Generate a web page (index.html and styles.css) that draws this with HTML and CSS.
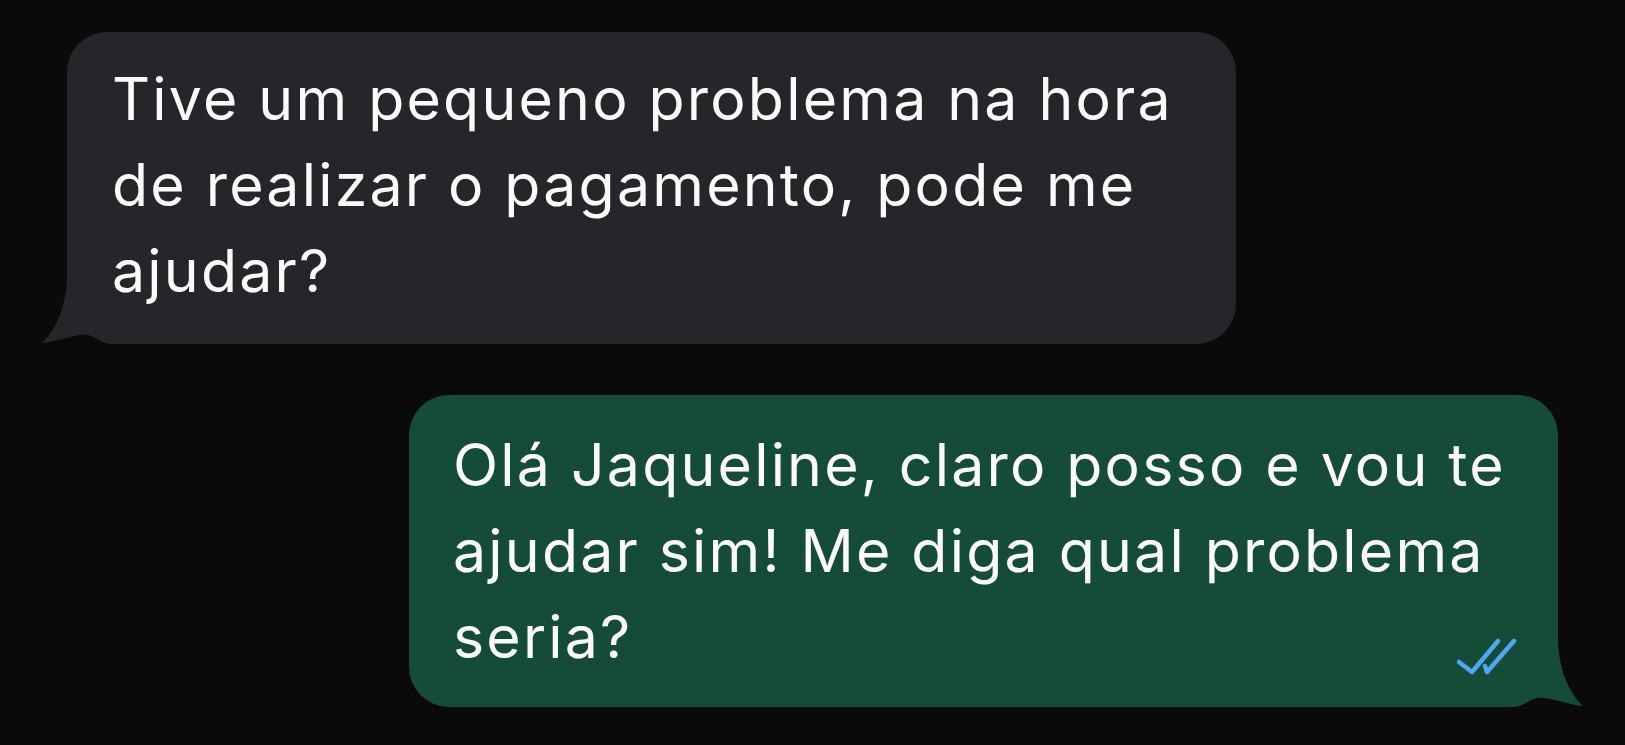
FILE: index.html
```html
<!DOCTYPE html>
<html lang="pt-BR">
<head>
    <meta charset="UTF-8">
    <meta name="viewport" content="width=device-width, initial-scale=1.0">
    <title>Conversa</title>
    <link rel="stylesheet" href="styles.css">
</head>
<body>
    <div class="chat">
        <div class="msg msg-in">
            <svg class="tail" viewBox="0 0 88 100" width="88" height="100">
                <path d="M25 0 L25 30 C25 60 15 85 0 99 C15 98 35 89 46 91 C55 93 60 100 70 100 L88 100 L88 0 Z"/>
            </svg>
            <p>Tive um pequeno problema na hora de realizar o pagamento, pode me ajudar?</p>
        </div>

        <div class="msg msg-out">
            <svg class="tail" viewBox="0 0 88 100" width="88" height="100">
                <path d="M25 0 L25 30 C25 60 15 85 0 99 C15 98 35 89 46 91 C55 93 60 100 70 100 L88 100 L88 0 Z"/>
            </svg>
            <p>Olá Jaqueline, claro posso e vou te ajudar sim! Me diga qual problema seria?</p>
            <svg class="ticks" viewBox="0 0 60 38" width="60" height="38">
                <path d="M2 25 L15 35 L41 4"/>
                <path d="M28 29 L30 35 L57 4"/>
            </svg>
        </div>
    </div>
</body>
</html>
```

FILE: styles.css
```css
body {
    margin: 0;
    background-color: #0a0a0a;
    font-family: Inter, "Noto Sans", sans-serif;
}
.chat {
    display: flex;
    flex-direction: column;
    gap: 51px;
    padding: 32px 67px;
}
.msg {
    position: relative;
    box-sizing: border-box;
    border-radius: 40px;
    color: #fafafa;
    font-size: 59px;
    line-height: 86px;
    letter-spacing: 2.2px;
}
.msg p {
    position: relative;
    margin: 0;
}
.msg-in {
    align-self: flex-start;
    width: 1169px;
    padding: 24px 30px 30px 45px;
    background-color: #252629;
    border-bottom-left-radius: 60px;
}
.msg-out {
    align-self: flex-end;
    width: 1149px;
    padding: 27px 30px 27px 44px;
    background-color: #154c37;
    border-bottom-right-radius: 60px;
}
.tail {
    position: absolute;
    bottom: 0;
    display: block;
}
.msg-in .tail {
    left: -25px;
    fill: #252629;
}
.msg-out .tail {
    right: -25px;
    fill: #154c37;
    transform: scaleX(-1);
}
.ticks {
    position: absolute;
    right: 41px;
    bottom: 32px;
    fill: none;
    stroke: #4fa6f3;
    stroke-width: 4.5;
    stroke-linecap: round;
    stroke-linejoin: round;
}
```
